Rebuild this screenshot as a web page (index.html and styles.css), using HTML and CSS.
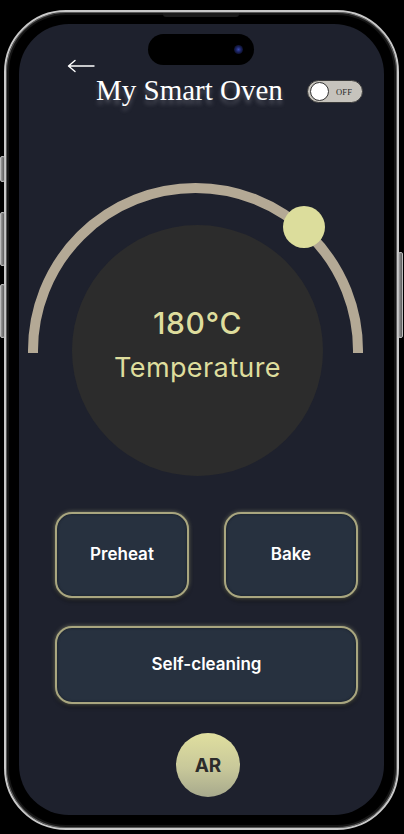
FILE: index.html
```html
<!DOCTYPE html>
<html lang="en">
<head>
<meta charset="utf-8">
<title>My Smart Oven</title>
<link rel="stylesheet" href="styles.css">
</head>
<body>
<div class="phone">
  <span class="btn-side btn-action"></span>
  <span class="btn-side btn-vol-up"></span>
  <span class="btn-side btn-vol-down"></span>
  <span class="btn-side btn-power"></span>
  <span class="speaker"></span>
  <div class="screen">
    <div class="island"><span class="camera"></span></div>
    <svg class="back" width="28" height="14" viewBox="0 0 28 14" aria-label="Back">
      <path d="M1.5 7 H27 M1.5 7 L8 1.5 M1.5 7 L8 12.5" fill="none" stroke="#ffffff" stroke-width="1.4" stroke-linecap="round" stroke-linejoin="round"/>
    </svg>
    <div class="header">
      <h1 class="title">My Smart Oven</h1>
      <div class="toggle"><span class="knob"></span><span class="toggle-label">OFF</span></div>
    </div>
    <div class="dial">
      <svg class="arc" width="365" height="180" viewBox="0 0 365 180">
        <path d="M14 170 L14 167.5 A162.5 162.5 0 0 1 339 167.5 L339 170" fill="none" stroke="#b4a995" stroke-width="10"/>
        <circle cx="285" cy="44" r="21" fill="#dcdd9c"/>
      </svg>
      <div class="readout">
        <div class="temp">180°C</div>
        <div class="temp-label">Temperature</div>
      </div>
    </div>
    <div class="controls">
      <button class="mode">Preheat</button>
      <button class="mode">Bake</button>
      <button class="mode mode-wide">Self-cleaning</button>
    </div>
    <button class="ar">AR</button>
  </div>
</div>
</body>
</html>
```

FILE: styles.css
```css
* { box-sizing: border-box; }
html, body { margin: 0; padding: 0; background: #000; }
body { width: 404px; height: 834px; overflow: hidden; font-family: "Inter", "Liberation Sans", sans-serif; }

.phone {
  position: relative;
  margin: 10px 0 0 4px;
  width: 395px;
  height: 820px;
  border: 2px solid #c9c9c9;
  border-radius: 62px;
  padding: 12px 13px 13px 13px;
  background: #000;
  box-shadow: inset 0 0 0 1px #5a5a5a, inset 0 0 0 3px #151515;
}

.btn-side {
  position: absolute;
  width: 5px;
  background: linear-gradient(90deg, #9a9a9a, #5c5c5c);
  border: 1px solid #bdbdbd;
  border-radius: 2px;
}
.btn-action { left: -6px; top: 144px; height: 26px; }
.btn-vol-up { left: -6px; top: 200px; height: 54px; }
.btn-vol-down { left: -6px; top: 272px; height: 54px; }
.btn-power { right: -6px; top: 240px; height: 86px; }

.speaker {
  position: absolute;
  left: 157px;
  top: 1px;
  width: 76px;
  height: 4px;
  border-radius: 0 0 3px 3px;
  background: #1c1c1c;
}

.screen {
  position: relative;
  width: 365px;
  height: 791px;
  border-radius: 50px;
  background: #1e212d;
  overflow: hidden;
}

.island {
  position: absolute;
  left: 129px;
  top: 10px;
  width: 106px;
  height: 31px;
  border-radius: 16px;
  background: #000;
}
.camera {
  position: absolute;
  left: 86px;
  top: 11px;
  width: 9px;
  height: 9px;
  border-radius: 50%;
  background: radial-gradient(circle, #3a4ab0 0, #1a2260 40%, #0a0c1e 80%);
}

.back { display: block; margin: 35px 0 0 48px; }

.header {
  display: flex;
  align-items: flex-start;
  margin-top: 1px;
  height: 32px;
  padding-left: 77px;
}
.title {
  margin: 0;
  font-family: "Liberation Serif", "Times New Roman", serif;
  font-weight: 400;
  font-size: 29px;
  line-height: 32px;
  color: #ffffff;
  white-space: nowrap;
  text-shadow: 0 4px 4px rgba(190, 190, 200, 0.35);
}
.toggle {
  display: flex;
  align-items: center;
  margin: 6px 21px 0 auto;
  width: 56px;
  height: 23px;
  padding: 0 2px;
  border-radius: 12px;
  background: #c6c3bc;
  border: 1px solid #3a3a3a;
}
.knob {
  width: 19px;
  height: 19px;
  border-radius: 50%;
  background: #fff;
  border: 1px solid #333;
}
.toggle-label {
  margin-left: 7px;
  font-family: "Liberation Serif", serif;
  font-size: 8.5px;
  color: #2a2a2a;
  letter-spacing: 0.2px;
}

.dial {
  position: relative;
  margin-top: 77px;
  padding: 42px 0 0 53px;
  height: 293px;
}
.arc { position: absolute; left: 0; top: 0; }
.readout {
  width: 251px;
  height: 251px;
  border-radius: 50%;
  background: #2c2c2c;
  padding-top: 80px;
  text-align: center;
  color: #dedd9d;
}
.temp {
  font-size: 30px;
  font-weight: 500;
  line-height: 36px;
  letter-spacing: 0.6px;
}
.temp-label {
  margin-top: 11px;
  font-size: 27px;
  font-weight: 400;
  line-height: 32px;
  letter-spacing: 0.4px;
}

.controls {
  display: grid;
  grid-template-columns: 134px 134px;
  grid-template-rows: 86px 78px;
  column-gap: 35px;
  row-gap: 28px;
  margin: 36px 0 0 36px;
}
.mode {
  font-family: "Inter", "Liberation Sans", sans-serif;
  font-size: 17px;
  font-weight: 600;
  color: #ffffff;
  background: #27313f;
  border: 2px solid #a9a67f;
  border-radius: 17px;
  box-shadow: 0 0 4px rgba(215, 215, 160, 0.45), 0 3px 4px rgba(0, 0, 0, 0.45), inset 0 0 3px rgba(0, 0, 0, 0.4);
  padding: 0 0 2px 0;
}
.mode-wide { grid-column: 1 / 3; }

.ar {
  display: block;
  margin: 29px 0 0 157px;
  width: 64px;
  height: 64px;
  border: none;
  border-radius: 50%;
  background: linear-gradient(180deg, #e0df9f 0%, #c8c89a 55%, #a7a98c 100%);
  font-family: "Inter", "Liberation Sans", sans-serif;
  font-size: 19px;
  font-weight: 700;
  color: #2b2b2b;
  padding: 0;
}
```
